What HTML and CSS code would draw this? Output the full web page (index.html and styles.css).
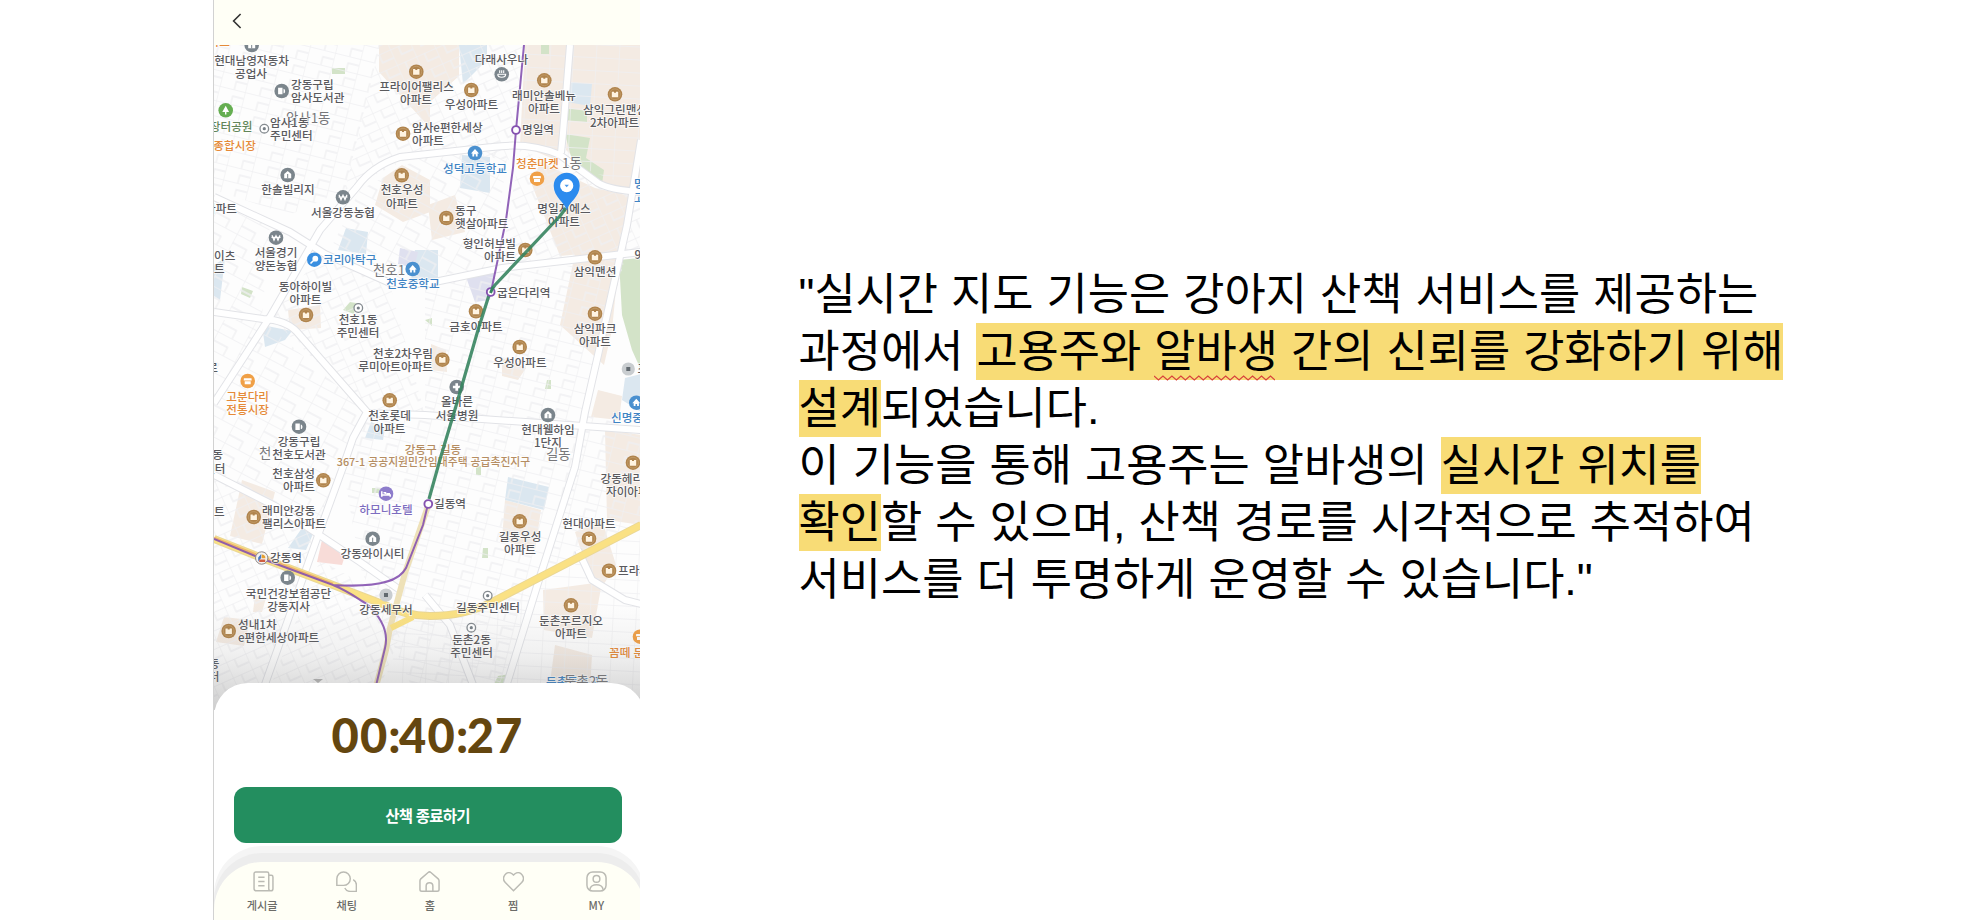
FILE: index.html
```html
<!DOCTYPE html>
<html lang="ko">
<head>
<meta charset="utf-8">
<title>실시간 산책 지도</title>
<link rel="stylesheet" href="styles.css">
</head>
<body>
<main class="slide">
  <section class="phone">
    <header class="topbar">
      <svg class="back" viewBox="0 0 10 16"><path d="M8.6 1 1.6 8l7 7"/></svg>
    </header>
    <div class="map">
      <svg class="map-canvas" viewBox="214 45 427 665" width="427" height="665">
        <defs>
          <pattern id="gridA" width="26" height="15" patternUnits="userSpaceOnUse" patternTransform="rotate(14)"><path class="lane" d="M0 0H26M0 0V15M15 15V7H26"/></pattern>
          <pattern id="gridB" width="21" height="17" patternUnits="userSpaceOnUse" patternTransform="rotate(-24)"><path class="lane" d="M0 0H21M0 0V17M9 0V9H21"/></pattern>
          <pattern id="gridC" width="29" height="19" patternUnits="userSpaceOnUse" patternTransform="rotate(28)"><path class="lane" d="M0 0H29M0 0V19M0 10H16V19"/></pattern>
          <pattern id="gridD" width="23" height="13" patternUnits="userSpaceOnUse" patternTransform="rotate(3)"><path class="lane" d="M0 0H23M0 0V13"/></pattern>
          <linearGradient id="shade" x1="0" y1="0" x2="0" y2="1"><stop offset="0" stop-color="#777" stop-opacity="0"/><stop offset=".45" stop-color="#777" stop-opacity=".09"/><stop offset="1" stop-color="#666" stop-opacity=".32"/></linearGradient>
          <g id="apt"><circle r="7.3" fill="#b0844d"/><circle r="5.4" fill="none" stroke="#c9a676" stroke-width=".6"/><path d="M-3.2-2.6h2.2v1h2v-1h2.2v5.6h-6.4z" fill="#fff4e2"/></g>
          <g id="home"><circle r="7.3" fill="#7b858c"/><path d="M0-4 3.5-1v4.3h-7V-1z" fill="#fff"/><path d="M0-1V3.3" stroke="#7b858c"/></g>
          <g id="bank"><circle r="7.3" fill="#7b858c"/><path d="M-4-2.5-2 2.5 0-2 2 2.5 4-2.5M-4.5-.3h9" fill="none" stroke="#fff" stroke-width="1.2"/></g>
          <g id="lib"><circle r="7.3" fill="#7b858c"/><path d="M-3.6-3.2h4.4v6.4h-4.4zM1.8-2.3c2 0 2.4 4.6 0 4.6z" fill="#fff"/></g>
          <g id="school"><circle r="7.3" fill="#4a90cf"/><path d="M0-4 4 .6H2.6v2.8H.8V1.2H-.8v2.2h-1.8V.6H-4z" fill="#fff"/></g>
          <g id="shop"><circle r="7.3" fill="#f0a047"/><path d="M-3.8-2.8h7.6L4-.5H-4zM-3 .2h6v3h-6z" fill="#fff"/></g>
          <g id="dot"><circle r="4.3" fill="#fff" stroke="#858b90" stroke-width="1.3"/><circle r="1.6" fill="#777f86"/></g>
          <g id="office"><circle r="6.6" fill="#c9cdd0"/><rect x="-2" y="-2" width="4" height="4" fill="#626a70"/></g>
          <g id="stop"><circle r="3.9" fill="#fff" stroke="#8552b0" stroke-width="1.9"/></g>
        </defs>

        <rect x="214" y="45" width="427" height="665" fill="#fdfdfd"/>
        <g class="built">
          <path d="M379 45H459V76L430 102V128L379 72ZM525 45H569L563 135 556 160 520 145ZM573 45H641V190L601 184 566 150ZM383 178 402 165 430 180V212L403 222 375 205ZM428 205 455 195 465 232 432 240ZM540 162 595 188 630 196 622 250 560 256 532 185ZM580 230 622 228 612 330 604 365 560 325ZM288 310 320 305 321 328 290 330ZM431 344 446 350 447 372 431 370ZM502 358 526 368 518 380 502 376ZM598 390 622 396 619 420 591 417ZM605 430 641 435V525L607 520ZM242 480 275 492 262 544 230 536ZM505 500 541 510 535 550 502 540ZM575 532 602 520 616 565 600 590 584 560ZM543 590 602 582 592 638 544 630ZM224 617 250 620 244 646 216 642ZM255 595 266 598 262 612 253 612ZM555 645 592 655 590 690 549 690Z"/>
        </g>
        <g class="water">
          <path d="M459 45H487V60L463 84ZM568 82 592 84 590 106 567 102ZM462 155 490 157 490 193 460 188ZM346 228 368 232 366 254 338 250ZM214 265 225 258 220 300 214 296ZM262 325 292 331 285 340 265 347ZM371 422 385 428 383 440 365 438ZM508 477 549 487 544 510 505 500ZM302 528 313 534 306 550 288 548ZM625 378 641 374V412L622 400ZM415 250 438 250 438 278 410 282Z"/>
        </g>
        <path d="M466 277 495 269 490 300 475 302ZM400 248 418 252 414 268 398 264Z" fill="#dfe0ef"/>
        <path class="park" d="M332 68h13v6h-13ZM541 45h8v9h-8ZM565 108 587 111V122L564 120ZM565 134 590 138 586 158 604 170 602 184 572 160ZM619 260 641 258V370L632 350 622 315ZM242 287 253 291 250 298 241 294ZM350 302 356 303 354 314 343 310ZM547 380h4v9h-6ZM483 548h5v10h-6ZM476 466h5v9h-5ZM372 488h8v5h-8ZM425 320 432 318V326ZM498 676 510 674 507 690 493 686Z"/>
        <path d="M322 540 346 552 342 565 317 562Z" fill="#f8dcd8"/>

        <path d="M214 45H380L345 190 290 215 214 190Z" fill="url(#gridA)"/>
        <path d="M380 45H525L510 160 425 150 345 190Z" fill="url(#gridB)"/>
        <path d="M525 45H641V190L520 145Z" fill="url(#gridD)"/>
        <path d="M214 200 270 225 262 317 214 312ZM360 190 425 155 508 150 492 268 390 282 330 250Z" fill="url(#gridC)"/>
        <path d="M520 150 641 195V253L500 268ZM320 255 390 285 425 415 367 410 270 317Z" fill="url(#gridB)"/>
        <path d="M425 285 625 258 585 412 641 430V520L540 583 500 683H410L360 567 343 467 365 413 425 412Z" fill="url(#gridA)"/>
        <path d="M214 320 262 320 367 412 345 467 320 530 214 475Z" fill="url(#gridC)"/>
        <path d="M214 480 320 530 263 700H214ZM320 560 410 610 375 700H265Z" fill="url(#gridB)"/>
        <path d="M540 583 641 530V710H500ZM410 620 535 590 505 700H375Z" fill="url(#gridD)"/>

        <g class="road-edge">
          <path id="r1" d="M214 197 290 232 325 254 390 283 425 284 502 268 641 252"/>
          <path id="r2" d="M214 403 270 317 320 230 357 187Q372 166 400 157L492 147Q530 142 560 155L598 183Q610 190 641 192"/>
          <path id="r3" d="M214 312 263 319Q286 320 297 332L367 412 353 438 343 467 320 530 263 690"/>
          <path id="r4" d="M641 140 627 225 598 355 585 412 575 467 538 583 505 690"/>
          <path id="r5" d="M570 45 563 133 561 153M367 413 425 415 641 430"/>
          <path id="r6" d="M214 475 277 507 360 562 400 590M578 550 592 580 625 600 641 604M425 595 450 625 475 690"/>
        </g>
        <g class="road"><use href="#r1"/><use href="#r2"/><use href="#r3"/><use href="#r4"/><use href="#r5"/><use href="#r6"/></g>

        <path d="M428 506 405 573 390 628 386 650 375 690" fill="none" stroke="#eee1b8" stroke-width="6"/>
        <path class="highway-edge" d="M214 539 262 558 333 585 385 605Q405 616 430 616 465 616 492 602L641 525"/>
        <path class="highway" d="M214 539 262 558 333 585 385 605Q405 616 430 616 465 616 492 602L641 525M391 628 413 617"/>
        <path d="M214 538 262 557 333 584" fill="none" stroke="#edb56c" stroke-width="2.5"/>

        <path class="metro" d="M524 45 516 130 513 168 506 220 491 292M428 504 423 525 406 568C400 580 382 588 333 585L260 558 214 539M333 585C350 592 358 599 367 604 382 618 389 632 385 648L375 690"/>

        <g class="labels">
          <g class="mid">
            <text x="251.500" y="61">현대남영자동차</text><text x="251" y="74">공업사</text>
            <text x="288" y="190">한솔빌리지</text><text x="343" y="213">서울강동농협</text>
            <text x="416.500" y="87">프라이어팰리스</text><text x="416" y="100">아파트</text>
            <text x="402" y="190">천호우성</text><text x="402" y="203.500">아파트</text>
            <text x="501.500" y="60">다래사우나</text><text x="471.500" y="105">우성아파트</text>
            <text x="544" y="96">래미안솔베뉴</text><text x="544" y="109">아파트</text>
            <text x="564" y="209">명일지에스</text><text x="564" y="222">아파트</text>
            <text x="276" y="252.500">서울경기</text><text x="276" y="265.500">양돈농협</text>
            <text x="305.500" y="286.500">동아하이빌</text><text x="305.500" y="299.500">아파트</text>
            <text x="358" y="319.500">천호1동</text><text x="358" y="332.500">주민센터</text>
            <text x="389.500" y="415.500">천호롯데</text><text x="389.500" y="428.500">아파트</text>
            <text x="299" y="441.500">강동구립</text><text x="299" y="455">천호도서관</text>
            <text x="595" y="272">삼익맨션</text><text x="476" y="327">금호아파트</text>
            <text x="595" y="329">삼익파크</text><text x="595" y="342">아파트</text>
            <text x="520" y="362.500">우성아파트</text><text x="457" y="402">올바른</text><text x="457" y="415.500">서울병원</text>
            <text x="548" y="430">현대웰하임</text><text x="548" y="443">1단지</text>
            <text x="372.500" y="554">강동와이시티</text><text x="288.500" y="593.500">국민건강보험공단</text><text x="288.500" y="606.500">강동지사</text>
            <text x="386" y="610">강동세무서</text><text x="589" y="523.500">현대아파트</text>
            <text x="520" y="536.500">길동우성</text><text x="520" y="549.500">아파트</text>
            <text x="488" y="607.500">길동주민센터</text><text x="471.500" y="639.500">둔촌2동</text><text x="471.500" y="652.500">주민센터</text>
            <text x="571" y="620.500">둔촌푸르지오</text><text x="571" y="633.500">아파트</text>
            <text class="blue" x="475" y="168.500">성덕고등학교</text><text class="blue" x="413" y="284">천호중학교</text>
            <text class="orange" x="247.700" y="397">고분다리</text><text class="orange" x="247.700" y="410">전통시장</text>
            <text class="violet" x="386" y="509.500">하모니호텔</text>
            <text class="tan" x="433" y="449.500">강동구 길동</text>
            <text class="tan small" x="433.500" y="461.500">367-1 공공지원민간임대주택 공급촉진지구</text>
          </g>
          <g>
            <text x="291" y="85">강동구립</text><text x="291" y="98">암사도서관</text>
            <text class="area" x="286" y="119">암사1동</text><text x="270" y="123">암사1동</text><text x="270" y="136">주민센터</text>
            <text x="412" y="127.500">암사e편한세상</text><text x="412" y="140.500">아파트</text>
            <text x="583" y="109.500">삼익그린맨션</text><text x="590" y="122.500">2차아파트</text>
            <text x="522" y="130">명일역</text><text x="455" y="211">동구</text><text x="455" y="224">햇살아파트</text>
            <text x="214" y="255.500">이츠</text><text x="214" y="268.500">트</text><text x="214" y="511.500">트</text>
            <text x="634.500" y="255">9</text><text x="497" y="292.500">굽은다리역</text><text x="637.500" y="369">조</text>
            <text x="262" y="510.500">래미안강동</text><text x="262" y="523.500">팰리스아파트</text>
            <text x="270" y="558">강동역</text><text x="238" y="624.500">성내1차</text><text x="238" y="637.500">e편한세상아파트</text>
            <text x="434" y="504">길동역</text><text x="600.500" y="478.500">강동헤리티지</text><text x="606" y="491.500">자이아파트</text>
            <text x="618" y="571">프라자</text><text class="blue" x="323" y="260">코리아탁구</text><text class="blue" x="611" y="418">신명중학교</text>
            <text class="orange" x="516" y="164">청춘마켓</text><text class="orange" x="609" y="652.500">꼼떼 둔촌</text>
            <text class="area" x="562" y="164">1동</text><text class="area" x="373" y="270.500">천호1</text><text class="area" x="259" y="453.500">천</text><text class="area" x="546" y="455">길동</text>
            <text class="blue" x="634" y="184">명</text><text class="blue" x="634" y="198">고</text>
            <text class="blue" x="546" y="682">둔촌동초교</text><text class="area" x="564" y="682">둔촌2동</text>
          </g>
          <g class="end">
            <text class="green" x="252.500" y="126.500">장터공원</text><text class="orange" x="256" y="146">종합시장</text>
            <text class="orange" x="230" y="42">마트</text><text x="237" y="208.500">아파트</text><text x="223" y="455">동</text><text x="225.500" y="469">센터</text>
            <text x="218" y="368">로</text><text x="218" y="240">ㅣ</text><text x="219.500" y="664">동</text><text x="219.500" y="677">터</text>
            <text x="433" y="353.500">천호2차우림</text><text x="433" y="366.500">루미아트아파트</text>
            <text x="516" y="244">형인허브빌</text><text x="516" y="256.500">아파트</text>
            <text x="315" y="473.500">천호삼성</text><text x="315" y="487">아파트</text>
          </g>
        </g>

        <use href="#apt" x="416.300" y="71.700"/><use href="#apt" x="403" y="133.700"/><use href="#apt" x="401.700" y="175.300"/>
        <use href="#apt" x="471.300" y="90"/><use href="#apt" x="544.300" y="80.300"/><use href="#apt" x="615" y="94.300"/>
        <use href="#apt" x="446.300" y="218"/><use href="#apt" x="306" y="315"/><use href="#apt" x="442.300" y="359.700"/>
        <use href="#apt" x="389.700" y="400.300"/><use href="#apt" x="525.300" y="250"/><use href="#apt" x="595" y="257.300"/>
        <use href="#apt" x="476" y="311.300"/><use href="#apt" x="595" y="313.700"/><use href="#apt" x="519.700" y="347"/>
        <use href="#apt" x="323.300" y="480.300"/><use href="#apt" x="253.700" y="517"/><use href="#apt" x="228.700" y="631"/>
        <use href="#apt" x="633" y="462.700"/><use href="#apt" x="589" y="538.700"/><use href="#apt" x="519.700" y="521.300"/>
        <use href="#apt" x="609" y="570.700"/><use href="#apt" x="571" y="605.300"/>
        <use href="#home" x="251.700" y="45"/><use href="#home" x="287.700" y="175"/><use href="#home" x="548" y="415"/><use href="#home" x="372.700" y="538.700"/>
        <use href="#bank" x="343" y="197.300"/><use href="#bank" x="276" y="237.700"/>
        <use href="#lib" x="281.700" y="91"/><use href="#lib" x="299" y="426.700"/><use href="#lib" x="287.700" y="577.700"/>
        <use href="#school" x="475" y="153"/><use href="#school" x="412.700" y="269"/><use href="#school" x="636.300" y="402.700"/>
        <use href="#shop" x="537" y="178.700"/><use href="#shop" x="247.700" y="381"/><use href="#shop" x="640" y="636.700"/>
        <use href="#dot" x="264.300" y="128.700"/><use href="#dot" x="358.300" y="308"/><use href="#dot" x="487.700" y="595.700"/><use href="#dot" x="471.300" y="627.700"/>
        <use href="#office" x="628.300" y="369"/><use href="#office" x="386" y="595"/>
        <g transform="translate(501.700 74.300)"><circle r="7.300" fill="#7b858c"/><path d="M-4 0h8c0 4-8 4-8 0M-2-4v2.600M0-4v2.600M2-4v2.600" fill="none" stroke="#fff" stroke-width="1.100"/></g>
        <g transform="translate(456.700 387)"><circle r="7.300" fill="#7b858c"/><path d="M0-3.800v7.600M-3.800 0h7.600" stroke="#fff" stroke-width="2.600"/></g>
        <g transform="translate(386 493.700)"><circle r="7.300" fill="#8d7ccb"/><path d="M-4.200-2.500v5.500M-4.200 1.200h8.400v1.800M-2.500-1h2v1.400M.5 0h3.500" fill="none" stroke="#fff" stroke-width="1.500"/></g>
        <g transform="translate(225.700 110.300)"><circle r="7.300" fill="#65ae51"/><path d="M0-4.600 3.400 1.600H.7v2.600H-.7V1.600h-2.700z" fill="#fff"/></g>
        <g transform="translate(314.300 259.700)"><circle r="7.300" fill="#3a8fe0"/><circle cx="1" cy="-1" r="2.900" fill="#fff"/><path d="M-1 1-3.800 3.800" stroke="#fff" stroke-width="1.600"/></g>
        <g transform="translate(261.700 558)"><circle r="6.200" fill="#f4f1ee" stroke="#8c8787"/><path d="M-3.500 3.500v-4l3-3.500V0z" fill="#4479c4"/><path d="M0-3.500a3.700 3.700 0 0 1 3.700 3.700H0z" fill="#e5a030"/><path d="M-2.500 1.500h6V4h-6z" fill="#d05e41"/></g>
        <use href="#stop" x="516" y="130"/>

        <rect x="214" y="605" width="427" height="105" fill="url(#shade)"/>
        <path d="M313 679h10l-5 4z" fill="#a8a8a8"/>
        <path class="track" d="M566 208 560 216 495 285 490 292 478 330 456 406 441 456 429 499"/>
        <use href="#stop" x="490.700" y="292"/><use href="#stop" x="428.300" y="504"/>
        <path d="M493 287 490.500 293" stroke="#36845f" stroke-width="3"/>
        <path d="M566.700 210C564.500 202 553.700 197 553.700 185.700a13 13 0 0 1 26 0C579.700 197 569 202 566.700 210Z" fill="#2c8bee"/>
        <circle cx="566.700" cy="185.700" r="6.600" fill="#fff"/><path d="M564.500 184.700h4.400l-2.200 2.600z" fill="#4f9bea"/>
      </svg>
    </div>
    <div class="sheet">
      <div class="timer">00<i>:</i>40<i>:</i>27</div>
      <button class="finish" type="button">산책 종료하기</button>
    </div>
    <nav class="tabs">
      <a class="tab"><svg viewBox="0 0 20 20"><path d="M15 18.800H3.200A2.200 2.200 0 0 1 1 16.600V2.600A1.600 1.600 0 0 1 2.600 1h10.800A1.600 1.600 0 0 1 15 2.600v14.200a2 2 0 0 0 4 0V5.600a1.500 1.500 0 0 0-1.500-1.500H15M5 6h6M5 10h6M5 14h6"/></svg><span>게시글</span></a>
      <a class="tab"><svg viewBox="0 0 20 20"><path d="M.8 13.600V7.300a6.400 6.400 0 1 1 6.400 6.400zM16.400 8.200c2 1.200 3 2.800 3 5v6.200h-5.800c-2.600 0-4.300-1.200-5.200-3.200"/></svg><span>채팅</span></a>
      <a class="tab"><svg viewBox="0 0 20 20"><path d="M2.600 19.200h14.800a1.700 1.700 0 0 0 1.700-1.700V9.300c0-.8-.3-1.300-.8-1.800l-7-6.100a2 2 0 0 0-2.600 0l-7 6.100C1.200 8 .9 8.500.9 9.300v8.200a1.700 1.700 0 0 0 1.700 1.700ZM6.800 19v-4.600a3.200 3.200 0 0 1 6.400 0V19"/></svg><span>홈</span></a>
      <a class="tab"><svg viewBox="0 0 20 20"><path d="M10 18.800 2.200 11C-2.200 6.400 3.400-1.200 8.600 2.600L10 3.900l1.400-1.300c5.200-3.800 10.800 3.800 6.400 8.400z"/></svg><span>찜</span></a>
      <a class="tab"><svg viewBox="0 0 20 20"><rect x=".9" y=".9" width="18.200" height="18.200" rx="5.500"/><circle cx="10" cy="7.500" r="3.200"/><path d="M3.700 17.800c.6-6.300 12-6.300 12.600 0"/></svg><span>MY</span></a>
    </nav>
  </section>

  <section class="copy">
    <p>"실시간 지도 기능은 강아지 산책 서비스를 제공하는</p>
    <p>과정에서 <mark>고용주와 <span class="typo">알바생<svg class="squiggle" viewBox="0 0 121 6"><path d="M0 1l4.480 4 4.480-4 4.480 4 4.480-4 4.480 4 4.480-4 4.480 4 4.480-4 4.480 4 4.480-4 4.480 4 4.480-4 4.480 4 4.480-4 4.480 4 4.480-4 4.480 4 4.480-4 4.480 4 4.480-4 4.480 4 4.480-4 4.480 4 4.480-4 4.480 4 4.480-4 4.480 4"/></svg></span> 간의 신뢰를 강화하기 위해</mark></p>
    <p><mark>설계</mark>되었습니다.</p>
    <p>이 기능을 통해 고용주는 알바생의 <mark>실시간 위치를</mark></p>
    <p><mark>확인</mark>할 수 있으며, 산책 경로를 시각적으로 추적하여</p>
    <p>서비스를 더 투명하게 운영할 수 있습니다."</p>
  </section>
</main>
</body>
</html>
```
FILE: styles.css
```css
* { box-sizing: border-box; }

body {
  margin: 0;
  background: #fff;
  font-family: "Noto Sans CJK KR", sans-serif;
}

.slide {
  display: flex;
  width: 1982px;
  height: 920px;
  overflow: hidden;
}

/* Phone screen */
.phone {
  display: flex;
  flex-direction: column;
  width: 427px;
  height: 920px;
  margin-left: 213px;
  border-left: 1px solid #d2d2d2;
  background: #fff;
  overflow: hidden;
}

.topbar {
  flex: 0 0 45px;
  padding: 13px 0 0 18px;
  background: #fffff6;
}

.back {
  display: block;
  width: 10px;
  height: 16px;
  fill: none;
  stroke: #333;
  stroke-width: 1.6;
}

.map {
  flex: 0 0 638px;
  height: 638px;
}

.map-canvas { display: block; }

.lane { fill: none; stroke: #f0f0f2; stroke-width: 1.3; }
.built { fill: #f4ebe3; }
.water { fill: #dbe7f0; }
.park { fill: #d3e3c8; }
.road-edge { fill: none; stroke: #e2e3e7; stroke-width: 8; stroke-linejoin: round; }
.road { fill: none; stroke: #fff; stroke-width: 6; stroke-linejoin: round; }
.highway-edge { fill: none; stroke: #ead795; stroke-width: 8; }
.highway { fill: none; stroke: #fae184; stroke-width: 6; }
.metro { fill: none; stroke: #8552b0; stroke-width: 2; opacity: .9; }
.track { fill: none; stroke: #36845f; stroke-width: 3.2; stroke-linejoin: round; opacity: .9; }

.labels text {
  font-size: 11.6px;
  font-weight: 500;
  fill: #5a5a5e;
  stroke: #fff;
  stroke-width: 1.6px;
  stroke-opacity: .8;
  paint-order: stroke;
  transform: translateY(4.2px);
}
.labels .mid { text-anchor: middle; }
.labels .end { text-anchor: end; }
.labels .area { font-size: 13.4px; font-weight: 400; fill: #77777a; }
.labels .blue { fill: #3f84c4; }
.labels .orange { fill: #e58a38; }
.labels .green { fill: #628558; }
.labels .violet { fill: #7d6dc0; }
.labels .tan { fill: #b58d62; }
.labels .small { font-size: 10.8px; }

/* Timer sheet */
.sheet {
  position: relative;
  flex: 0 0 179px;
  display: flex;
  flex-direction: column;
  align-items: center;
  width: 431px;
  padding-right: 4px;
  border-radius: 34px 34px 0 0;
  background: #fff;
}

.timer {
  height: 104px;
  padding-top: 18px;
  color: #64460f;
  font: 900 47px/68px Lato, "Open Sans", sans-serif;
  letter-spacing: 1.2px;
}

.timer i {
  font-style: normal;
  letter-spacing: -1.6px;
}

.finish {
  width: 388px;
  height: 56px;
  padding: 0;
  border: 0;
  border-radius: 12px;
  background: #238e5f;
  color: #fff;
  font: 700 15.5px/54px "Noto Sans CJK KR", sans-serif;
  letter-spacing: -.8px;
}

/* Bottom navigation */
.tabs {
  position: relative;
  flex: 0 0 59px;
  display: flex;
  width: 431px;
  height: 59px;
  padding: 9px 7px 0 8px;
  border-radius: 48px 48px 0 0;
  background: #fffff6;
  box-shadow: 0 -9px 0 #ededed, 0 -16px 0 #f5f5f5;
}

.tab {
  display: flex;
  flex: 0 0 83.2px;
  flex-direction: column;
  align-items: center;
  gap: 4px;
  color: #6c6c68;
  font-size: 11.2px;
  font-weight: 500;
  line-height: 18px;
}

.tab:first-child span { margin-right: 3px; }

.tab svg {
  width: 21px;
  height: 21px;
  fill: none;
  stroke: #bbbbb4;
  stroke-width: 1.4;
}

/* Description */
.copy {
  margin-left: 158.5px;
  padding-top: 266px;
  color: #000;
  font-family: "Liberation Sans", "Noto Sans CJK KR", sans-serif;
  font-size: 44.8px;
  line-height: 57px;
  word-spacing: .6px;
  white-space: nowrap;
}

.copy p { height: 57px; margin: 0; }

.copy mark {
  display: inline-block;
  height: 57px;
  background: #f8dc76;
  color: inherit;
  vertical-align: top;
}

.typo { position: relative; }

.squiggle {
  position: absolute;
  left: 0;
  bottom: -5px;
  width: 121px;
  height: 6px;
  fill: none;
  stroke: #d8423c;
  stroke-width: 1.2;
}
```
